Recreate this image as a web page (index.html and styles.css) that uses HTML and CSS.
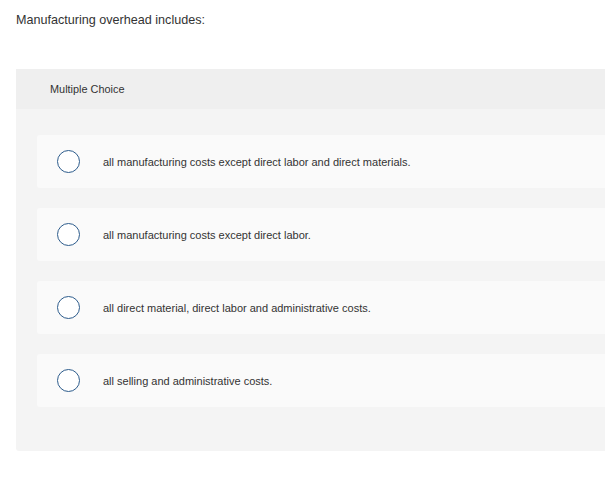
FILE: index.html
```html
<!DOCTYPE html>
<html>
<head>
<meta charset="utf-8">
<link rel="stylesheet" href="styles.css">
</head>
<body>
<p class="question">Manufacturing overhead includes:</p>
<section class="panel">
  <div class="panel-head">Multiple Choice</div>
  <div class="panel-body">
    <label class="option"><span class="radio"></span><span class="opt-text">all manufacturing costs except direct labor and direct materials.</span></label>
    <label class="option"><span class="radio"></span><span class="opt-text">all manufacturing costs except direct labor.</span></label>
    <label class="option"><span class="radio"></span><span class="opt-text">all direct material, direct labor and administrative costs.</span></label>
    <label class="option"><span class="radio"></span><span class="opt-text">all selling and administrative costs.</span></label>
  </div>
</section>
</body>
</html>
```

FILE: styles.css
```css
html, body {
  margin: 0;
  padding: 0;
  background: #ffffff;
  overflow: hidden;
}
body {
  font-family: "Liberation Sans", Arial, sans-serif;
  color: #333333;
}
.question {
  margin: 0;
  padding: 13px 0 0 16px;
  font-size: 12.6px;
  line-height: 15px;
  height: 69px;
  box-sizing: border-box;
}
.panel {
  margin-left: 16px;
  background: #f4f4f4;
  border-radius: 0 0 0 3px;
}
.panel-head {
  height: 40px;
  background: #efefef;
  display: flex;
  align-items: center;
  padding-left: 34px;
  font-size: 10.9px;
  color: #333333;
}
.panel-body {
  display: flex;
  flex-direction: column;
  gap: 20px;
  padding: 26px 0 44px 21px;
}
.option {
  height: 53px;
  background: #fafafa;
  border-radius: 3px 0 0 3px;
  display: flex;
  align-items: center;
  padding-left: 20px;
}
.radio {
  width: 21px;
  height: 21px;
  border: 1.5px solid #2d5c8c;
  border-radius: 50%;
  flex: none;
  background: #ffffff;
}
.opt-text {
  margin-left: 23px;
  font-size: 11px;
  color: #333333;
}
```
